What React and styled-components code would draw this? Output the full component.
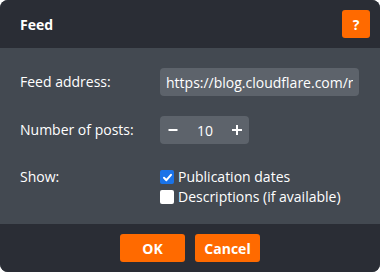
import React, { useState } from "react";
import styled, { createGlobalStyle } from "styled-components";

const Global = createGlobalStyle`
  html, body { margin: 0; padding: 0; background: #ffffff; }
  body { font-family: "Open Sans", "Noto Sans", sans-serif; }
  * { box-sizing: border-box; }
`;

const Dialog = styled.div`
  width: 380px;
  height: 272px;
  border-radius: 8px;
  overflow: hidden;
  display: flex;
  flex-direction: column;
  background: #434951;
  color: #ffffff;
  font-size: 14px;
`;

const Header = styled.div`
  height: 48px;
  flex: none;
  background: #2a2d35;
  display: flex;
  align-items: center;
  justify-content: space-between;
  padding: 0 10px 0 20px;
`;

const Title = styled.div`
  font-weight: 700;
  font-size: 14px;
  letter-spacing: 0;
`;

const OrangeButton = styled.button`
  border: none;
  background: #ff6a00;
  color: #ffffff;
  font-family: "Open Sans", "Noto Sans", sans-serif;
  font-weight: 700;
  font-size: 14px;
  height: 28px;
  width: ${(p) => p.$w || 28}px;
  border-radius: 3px;
  padding: 0;
  display: flex;
  align-items: center;
  justify-content: center;
  cursor: pointer;
`;

const Body = styled.div`
  flex: 1;
  display: grid;
  grid-template-columns: 140px 1fr;
  align-content: start;
  row-gap: 20px;
  padding: 20px 20px 0 20px;
`;

const Label = styled.div`
  height: ${(p) => p.$h || 28}px;
  display: flex;
  align-items: center;
  line-height: 20px;
`;

const TextInput = styled.input`
  width: 199px;
  height: 28px;
  border: none;
  border-radius: 4px;
  background: #5d636b;
  color: #ffffff;
  font-family: "Open Sans", "Noto Sans", sans-serif;
  font-size: 14px;
  padding: 0 6px;
  outline: none;
`;

const Stepper = styled.div`
  width: 89px;
  height: 28px;
  border-radius: 4px;
  background: #5d636b;
  display: flex;
  align-items: center;
`;

const StepButton = styled.button`
  width: ${(p) => p.$w}px;
  height: 28px;
  border: none;
  background: transparent;
  padding: 0;
  display: flex;
  align-items: center;
  justify-content: center;
  cursor: pointer;
`;

const StepValue = styled.div`
  width: 40px;
  text-align: center;
  font-size: 14px;
`;

const CheckList = styled.div`
  display: flex;
  flex-direction: column;
  margin-top: 3px;
`;

const CheckRow = styled.label`
  height: 20px;
  display: flex;
  align-items: center;
  gap: 4px;
  line-height: 20px;
  cursor: pointer;
`;

const Box = styled.span`
  width: 14px;
  height: 14px;
  border-radius: 2px;
  background: ${(p) => (p.$on ? "#1a73e8" : "#ffffff")};
  display: flex;
  align-items: center;
  justify-content: center;
  flex: none;
`;

const ShowLabel = styled(Label)`
  margin-top: 3px;
`;

const Footer = styled.div`
  height: 48px;
  flex: none;
  background: #2a2d35;
  display: flex;
  align-items: center;
  justify-content: center;
  gap: 10px;
`;

function Check({ on, children, onClick }) {
  return (
    <CheckRow onClick={onClick}>
      <Box $on={on}>
        {on && (
          <svg width="11" height="11" viewBox="0 0 11 11">
            <path d="M2 5.8 L4.4 8.2 L9 2.8" fill="none" stroke="#fff" strokeWidth="2" strokeLinecap="round" strokeLinejoin="round" />
          </svg>
        )}
      </Box>
      {children}
    </CheckRow>
  );
}

export default function App() {
  const [n, setN] = useState(10);
  const [dates, setDates] = useState(true);
  const [desc, setDesc] = useState(false);
  return (
    <>
      <Global />
      <Dialog>
        <Header>
          <Title>Feed</Title>
          <OrangeButton>?</OrangeButton>
        </Header>
        <Body>
          <Label>Feed address:</Label>
          <TextInput defaultValue="https://blog.cloudflare.com/rss/" />
          <Label>Number of posts:</Label>
          <Stepper>
            <StepButton $w={25} onClick={() => setN(n - 1)}>
              <svg width="10" height="10" viewBox="0 0 10 10">
                <rect x="0.5" y="4" width="9" height="2" fill="#fff" />
              </svg>
            </StepButton>
            <StepValue>{n}</StepValue>
            <StepButton $w={24} onClick={() => setN(n + 1)}>
              <svg width="10" height="10" viewBox="0 0 10 10">
                <rect x="0" y="4" width="10" height="2" fill="#fff" />
                <rect x="4" y="0" width="2" height="10" fill="#fff" />
              </svg>
            </StepButton>
          </Stepper>
          <ShowLabel $h={20}>Show:</ShowLabel>
          <CheckList>
            <Check on={dates} onClick={() => setDates(!dates)}>Publication dates</Check>
            <Check on={desc} onClick={() => setDesc(!desc)}>Descriptions (if available)</Check>
          </CheckList>
        </Body>
        <Footer>
          <OrangeButton $w={65}>OK</OrangeButton>
          <OrangeButton $w={65}>Cancel</OrangeButton>
        </Footer>
      </Dialog>
    </>
  );
}
